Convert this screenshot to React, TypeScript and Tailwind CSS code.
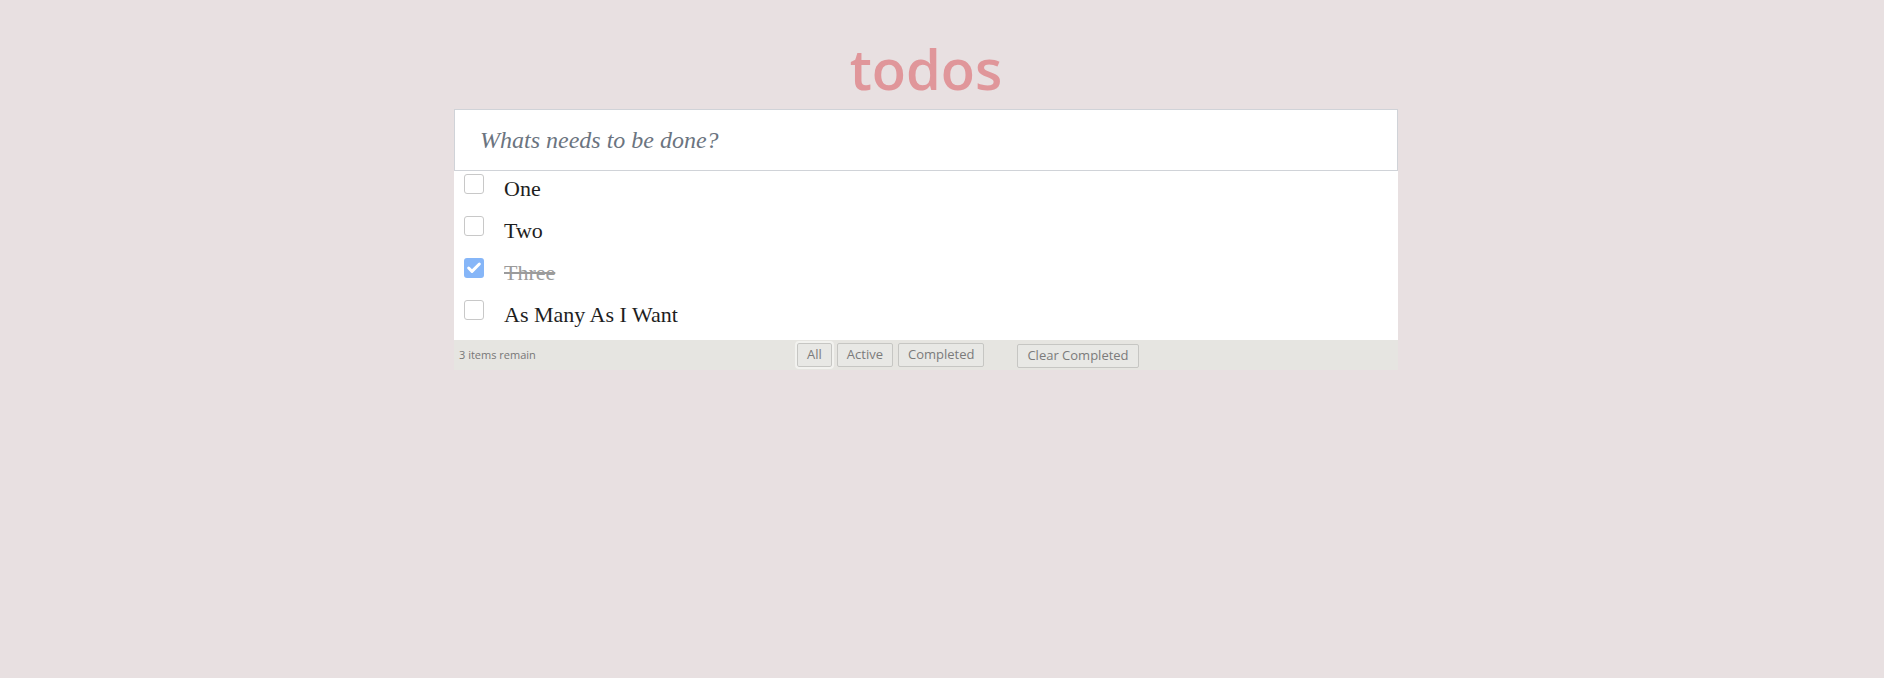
import { Check } from 'lucide-react';

type Todo = { id: number; text: string; done: boolean };

const todos: Todo[] = [
  { id: 1, text: 'One', done: false },
  { id: 2, text: 'Two', done: false },
  { id: 3, text: 'Three', done: true },
  { id: 4, text: 'As Many As I Want', done: false },
];

function Box({ checked }: { checked: boolean }) {
  if (checked) {
    return (
      <span className="mt-[3px] ml-[10px] w-5 h-5 shrink-0 rounded-[3px] bg-[#86b6f8] flex items-center justify-center">
        <Check size={16} strokeWidth={4.5} color="#ffffff" />
      </span>
    );
  }
  return (
    <span className="mt-[3px] ml-[10px] w-5 h-5 shrink-0 rounded-[3px] border border-[#c8c8c8] bg-white" />
  );
}

function TodoRow({ todo }: { todo: Todo }) {
  return (
    <li className="h-[42px] flex items-start">
      <Box checked={todo.done} />
      <span
        className={
          todo.done
            ? 'ml-5 mt-[5px] leading-[26px] text-[22px] text-[#9b9b9b] line-through'
            : 'ml-5 mt-[5px] leading-[26px] text-[22px] text-[#1e1e1e]'
        }
        style={{ fontFamily: '"Liberation Serif", serif' }}
      >
        {todo.text}
      </span>
    </li>
  );
}

function FilterButton({ label, active }: { label: string; active?: boolean }) {
  return (
    <button
      className={
        active
          ? 'h-[24px] px-[9px] rounded-[2px] border border-[#c6c6c3] bg-[#e8e8e5] text-[13px] text-[#7b7b7b] outline outline-2 outline-[#f2f2ef]'
          : 'h-[24px] px-[9px] rounded-[2px] border border-[#c6c6c3] bg-[#e8e8e5] text-[13px] text-[#7b7b7b]'
      }
    >
      {label}
    </button>
  );
}

export default function App() {
  const remaining = todos.filter((t) => !t.done).length;

  return (
    <div
      className="min-h-[678px] bg-[#e8e0e1] flex flex-col items-center pt-[36px] pr-[32px]"
      style={{ fontFamily: '"Open Sans", sans-serif' }}
    >
      <h1 className="text-[56px] leading-[64px] font-semibold text-[#e0969a] mb-[9px]">todos</h1>

      <section className="w-[944px]">
        <input
          className="w-full h-[62px] px-[25px] bg-white border border-[#d0d3d8] text-[24px] italic text-[#333] placeholder:text-[#6b7480] outline-none"
          style={{ fontFamily: '"Liberation Serif", serif' }}
          placeholder="Whats needs to be done?"
        />

        <ul className="bg-white pb-px">
          {todos.map((t) => (
            <TodoRow key={t.id} todo={t} />
          ))}
        </ul>

        <footer className="h-[30px] bg-[#e6e5e1] flex items-center pl-[5px]">
          <span className="w-[338px] text-[11px] text-[#777]">{remaining} items remain</span>
          <div className="flex items-center gap-[5px]">
            <FilterButton label="All" active />
            <FilterButton label="Active" />
            <FilterButton label="Completed" />
          </div>
          <div className="ml-[33px]">
            <FilterButton label="Clear Completed" />
          </div>
        </footer>
      </section>
    </div>
  );
}
